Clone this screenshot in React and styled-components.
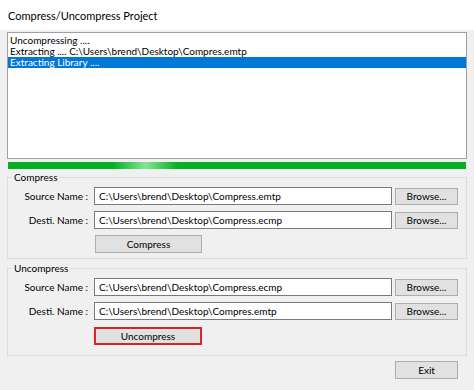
import React from 'react'
import styled, { createGlobalStyle } from 'styled-components'

const GlobalStyle = createGlobalStyle`
  html, body {
    margin: 0;
    padding: 0;
    background: #f0f0f0;
  }
  body {
    font-family: Lato, "Noto Sans", "Liberation Sans", sans-serif;
    font-size: 10px;
    color: #000;
  }
`

const Window = styled.div`
  width: 474px;
  height: 390px;
  display: flex;
  flex-direction: column;
  background: #f0f0f0;
  overflow: hidden;
`

const TitleBar = styled.div`
  height: 30px;
  flex: none;
  background: #fff;
  display: flex;
  align-items: center;
  padding-left: 8px;
  font-size: 11px;
  color: #000;
`

const Client = styled.div`
  display: flex;
  flex-direction: column;
  padding: 2px 7px 0 7px;
`

const ListBox = styled.div`
  height: 123px;
  background: #fff;
  border: 1px solid #a0a0a0;
  padding-top: 2px;
  display: flex;
  flex-direction: column;
`

const ListItem = styled.div`
  height: 11px;
  line-height: 11px;
  padding-left: 2px;
  white-space: nowrap;
  background: ${p => (p.selected ? '#0078d7' : 'transparent')};
  color: ${p => (p.selected ? '#fff' : '#000')};
`

const Progress = styled.div`
  margin: 3px 1px 0 1px;
  height: 7px;
  background: linear-gradient(
    90deg,
    #06b025 0%,
    #06b025 23%,
    #86e394 30%,
    #06b025 37%,
    #06b025 100%
  );
`

const Group = styled.fieldset`
  margin: 1px 0 0 0;
  padding: 3px 7px ${p => p.bottom || 5}px 0;
  border: 1px solid #dcdcdc;
  min-width: 0;
  & + & {
    margin-top: 2px;
  }
`

const Legend = styled.legend`
  margin-left: 4px;
  padding: 0 2px;
  line-height: 14px;
`

const Form = styled.div`
  display: grid;
  grid-template-columns: 80px 298px 63px;
  column-gap: 6px;
  row-gap: 6px;
  align-items: center;
  & > :nth-child(3n) {
    margin-left: -3px;
  }
`

const Label = styled.div`
  text-align: right;
  white-space: nowrap;
`

const Input = styled.div`
  height: 16px;
  line-height: 16px;
  border: 1px solid #7a7a7a;
  background: #fff;
  padding-left: 4px;
  white-space: nowrap;
  overflow: hidden;
`

const Button = styled.div`
  box-sizing: border-box;
  height: ${p => p.h || 17}px;
  width: ${p => p.w || 63}px;
  border: ${p => (p.flagged ? '2px solid #d9232e' : '1px solid #adadad')};
  background: #e1e1e1;
  display: flex;
  align-items: center;
  justify-content: center;
`

const ActionCell = styled.div`
  grid-column: 2 / 3;
  display: flex;
  padding-left: ${p => p.inset || 0}px;
  padding-top: ${p => p.top || 0}px;
`

const Footer = styled.div`
  display: flex;
  justify-content: flex-end;
  padding: 5px 9px 0 0;
`

const FileRow = ({ label, value }) => (
  <>
    <Label>{label}</Label>
    <Input>{value}</Input>
    <Button>Browse...</Button>
  </>
)

export default function App() {
  return (
    <Window>
      <GlobalStyle />
      <TitleBar>Compress/Uncompress Project</TitleBar>
      <Client>
        <ListBox>
          <ListItem>Uncompressing ....</ListItem>
          <ListItem>Extracting .... C:\Users\brend\Desktop\Compres.emtp</ListItem>
          <ListItem selected>Extracting Library ....</ListItem>
        </ListBox>
        <Progress />
        <Group>
          <Legend>Compress</Legend>
          <Form>
            <FileRow label="Source Name :" value="C:\Users\brend\Desktop\Compress.emtp" />
            <FileRow label="Desti. Name :" value="C:\Users\brend\Desktop\Compress.ecmp" />
            <ActionCell inset={1}>
              <Button w={107} h={18}>Compress</Button>
            </ActionCell>
          </Form>
        </Group>
        <Group bottom={10}>
          <Legend>Uncompress</Legend>
          <Form>
            <FileRow label="Source Name :" value="C:\Users\brend\Desktop\Compress.ecmp" />
            <FileRow label="Desti. Name :" value="C:\Users\brend\Desktop\Compres.emtp" />
            <ActionCell top={1}>
              <Button w={108} h={18} flagged>Uncompress</Button>
            </ActionCell>
          </Form>
        </Group>
        <Footer>
          <Button h={18}>Exit</Button>
        </Footer>
      </Client>
    </Window>
  )
}
